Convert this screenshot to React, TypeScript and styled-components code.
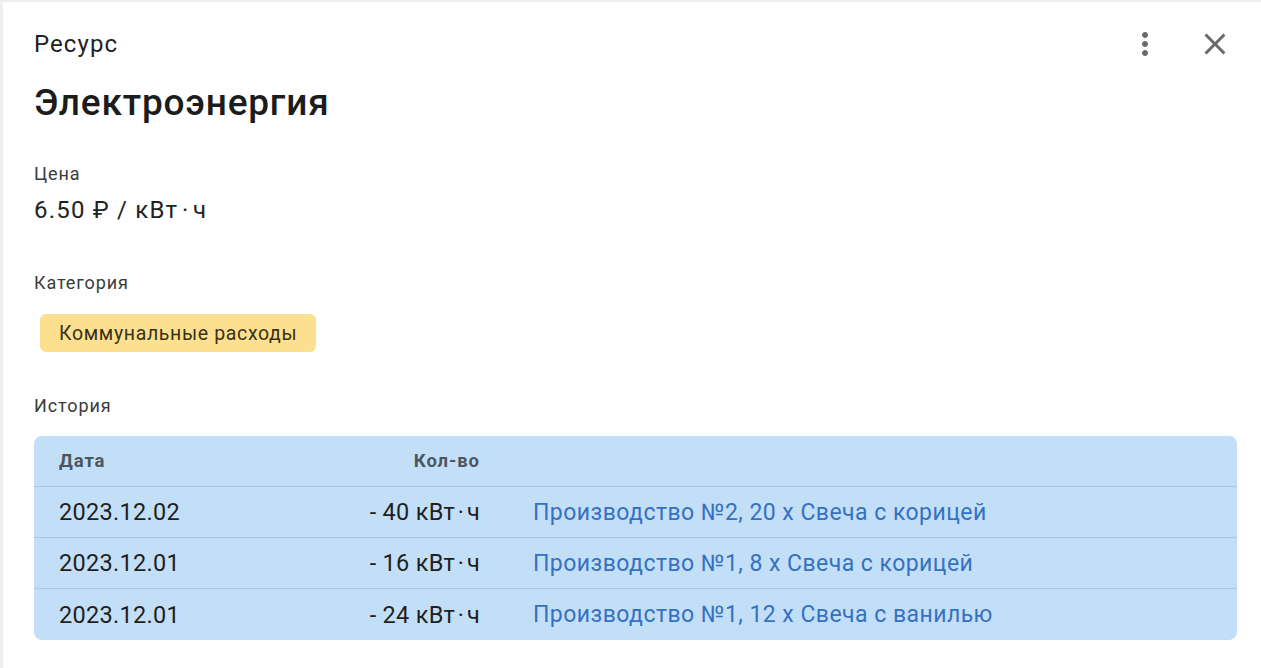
import React from "react";
import styled, { createGlobalStyle } from "styled-components";

type HistoryRow = {
  date: string;
  amount: string;
  source: string;
};

// narrow spaces around the middle dot, as in "кВт · ч"
const KWH = "кВт\u200A·\u200Aч";

const history: HistoryRow[] = [
  { date: "2023.12.02", amount: `- 40 ${KWH}`, source: "Производство №2, 20 x Свеча с корицей" },
  { date: "2023.12.01", amount: `- 16 ${KWH}`, source: "Производство №1, 8 x Свеча с корицей" },
  { date: "2023.12.01", amount: `- 24 ${KWH}`, source: "Производство №1, 12 x Свеча с ванилью" },
];

export default function App() {
  return (
    <>
      <GlobalStyle />
      <Card>
        <HeaderRow>
          <Overline>Ресурс</Overline>
          <Actions>
            <IconButton aria-label="menu">
              <svg viewBox="0 0 24 24" width="36" height="36">
                <path
                  fill="currentColor"
                  d="M12 8c1.1 0 2-.9 2-2s-.9-2-2-2-2 .9-2 2 .9 2 2 2m0 2c-1.1 0-2 .9-2 2s.9 2 2 2 2-.9 2-2-.9-2-2-2m0 6c-1.1 0-2 .9-2 2s.9 2 2 2 2-.9 2-2-.9-2-2-2"
                />
              </svg>
            </IconButton>
            <IconButton aria-label="close">
              <svg viewBox="0 0 24 24" width="36" height="36">
                <path
                  fill="currentColor"
                  d="M19 6.41 17.59 5 12 10.59 6.41 5 5 6.41 10.59 12 5 17.59 6.41 19 12 13.41 17.59 19 19 17.59 13.41 12z"
                />
              </svg>
            </IconButton>
          </Actions>
        </HeaderRow>

        <Title>Электроэнергия</Title>

        <Label $gap={39}>Цена</Label>
        <Value>6.50 ₽ / {KWH}</Value>

        <Label $gap={49}>Категория</Label>
        <Chip>Коммунальные расходы</Chip>

        <Label $gap={44}>История</Label>
        <Table>
          <HeadRow>
            <HeadCell>Дата</HeadCell>
            <HeadCell $right>Кол-во</HeadCell>
            <HeadCell />
          </HeadRow>
          {history.map((row, idx) => (
            <BodyRow key={idx}>
              <Cell>{row.date}</Cell>
              <Cell $right>{row.amount}</Cell>
              <LinkCell href="#">{row.source}</LinkCell>
            </BodyRow>
          ))}
        </Table>
      </Card>
    </>
  );
}

const GlobalStyle = createGlobalStyle`
  html, body {
    margin: 0;
    padding: 0;
    background: #efefef;
    font-family: Roboto, "Noto Sans", "DejaVu Sans", sans-serif;
  }
  * {
    box-sizing: border-box;
  }
`;

const Card = styled.div`
  margin: 2px 0 0 3px;
  min-height: 666px;
  background: #fff;
  padding: 24px 24px 28px 31px;
  display: flex;
  flex-direction: column;
  align-items: flex-start;
`;

const HeaderRow = styled.div`
  align-self: stretch;
  height: 36px;
  display: flex;
  align-items: center;
  justify-content: space-between;
`;

const Overline = styled.div`
  font-size: 24px;
  line-height: 36px;
  letter-spacing: 0.045em;
  color: #222;
`;

const Actions = styled.div`
  display: flex;
  align-items: center;
  gap: 34px;
  margin-right: 4px;
`;

const IconButton = styled.button`
  width: 36px;
  height: 36px;
  padding: 0;
  border: 0;
  background: none;
  color: #6a6a6a;
  display: flex;
  align-items: center;
  justify-content: center;
  cursor: pointer;
`;

const Title = styled.h1`
  margin: 19px 0 0;
  font-size: 37px;
  line-height: 44px;
  font-weight: 500;
  letter-spacing: 0.022em;
  color: #1c1c1c;
`;

const Label = styled.div<{ $gap: number }>`
  margin-top: ${(p) => p.$gap}px;
  font-size: 18px;
  line-height: 20px;
  letter-spacing: 0.05em;
  color: #3a3a3a;
`;

const Value = styled.div`
  margin-top: 12px;
  font-size: 24px;
  line-height: 28px;
  letter-spacing: 0.05em;
  color: #222;
`;

const Chip = styled.div`
  margin: 21px 0 0 6px;
  height: 38px;
  padding: 0 19px;
  display: flex;
  align-items: center;
  border-radius: 6px;
  background: #fde08f;
  color: #3a3119;
  font-size: 19.5px;
  letter-spacing: 0.033em;
`;

const Table = styled.div`
  align-self: stretch;
  margin-top: 20px;
  background: #c3dff7;
  border-radius: 8px;
  overflow: hidden;
`;

const HeadRow = styled.div`
  display: grid;
  grid-template-columns: 220px 252px 1fr;
  height: 51px;
  border-bottom: 1px solid #a9c8e3;
  align-items: center;
`;

const BodyRow = styled(HeadRow)`
  &:last-child {
    border-bottom: 0;
  }
`;

const HeadCell = styled.div<{ $right?: boolean }>`
  padding: 0 26px 0 25px;
  text-align: ${(p) => (p.$right ? "right" : "left")};
  font-size: 18.5px;
  font-weight: 700;
  letter-spacing: 0.05em;
  color: #4b5661;
`;

const Cell = styled.div<{ $right?: boolean }>`
  padding: 0 26px 0 25px;
  text-align: ${(p) => (p.$right ? "right" : "left")};
  font-size: 23.5px;
  letter-spacing: 0.012em;
  color: #1f1f1f;
  white-space: nowrap;
`;

const LinkCell = styled.a`
  padding-left: 27px;
  font-size: 23px;
  letter-spacing: 0.02em;
  color: #3571c2;
  text-decoration: none;
  white-space: nowrap;
`;
